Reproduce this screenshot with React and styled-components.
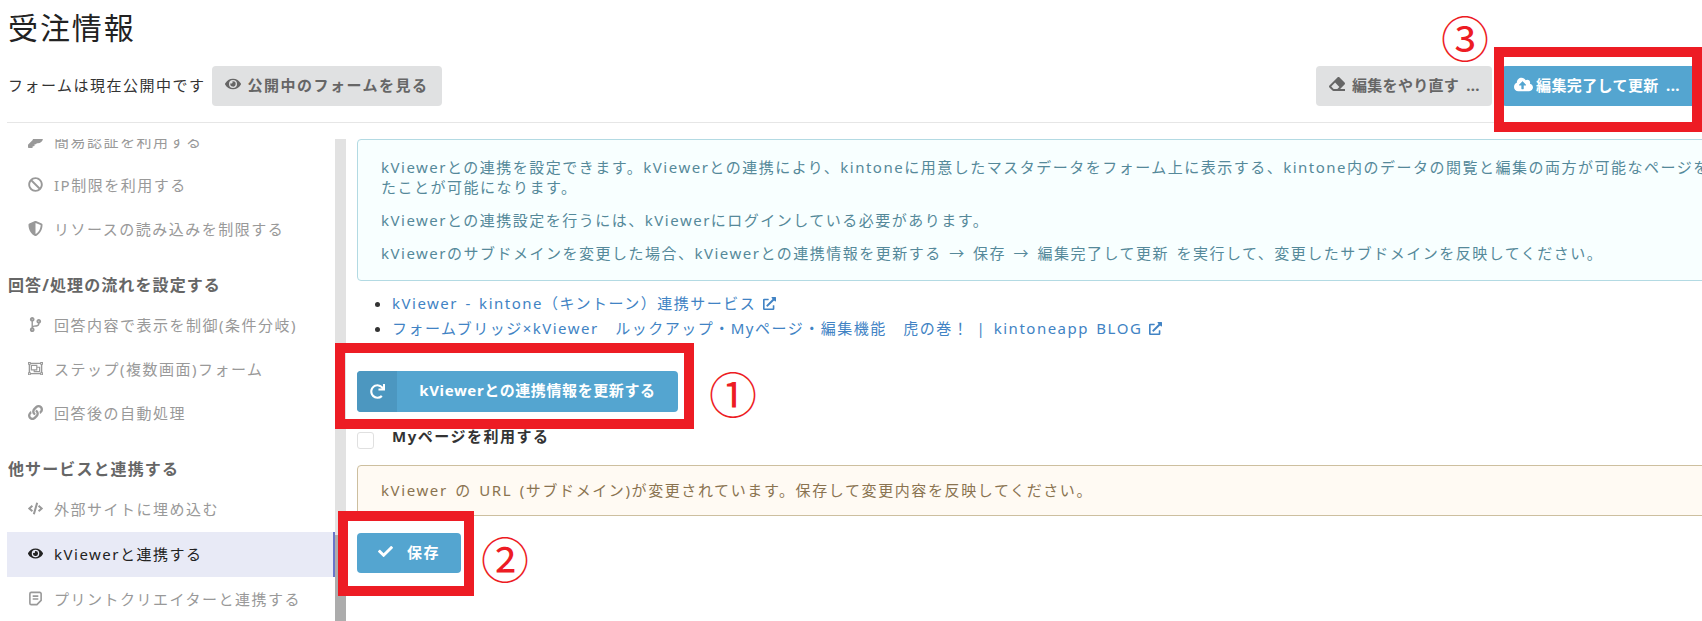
import styled, { createGlobalStyle } from 'styled-components';
import {
  FaBan, FaCheck, FaCloudUploadAlt, FaCode, FaCodeBranch, FaEraser, FaExternalLinkAlt, FaEye,
  FaKey, FaLink, FaRedo, FaRegObjectGroup, FaShieldAlt,
} from 'react-icons/fa';

const Global = createGlobalStyle`
  html, body { margin: 0; padding: 0; background: #fff; }
  body { font-family: "Noto Sans", "Noto Sans CJK JP", sans-serif; color: #333; }
`;

const Page = styled.div`
  position: relative;
  width: 1702px;
  height: 621px;
  overflow: hidden;
  display: flex;
  flex-direction: column;
`;

const Header = styled.header`
  flex: none;
  height: 122px;
  margin-left: 7px;
  border-bottom: 1px solid #e6e6e6;
  display: flex;
  flex-direction: column;
`;

const Title = styled.h1`
  margin: 10px 0 0 1px;
  height: 56px;
  font-size: 30px;
  line-height: 36px;
  font-weight: 400;
  letter-spacing: 1.9px;
  color: #222;
`;

const Toolbar = styled.div`
  display: flex;
  align-items: center;
  justify-content: space-between;
  padding-right: 6px;
`;

const ToolGroup = styled.div`
  display: flex;
  align-items: center;
  gap: ${p => p.$gap}px;
`;

const Status = styled.span`
  margin: 0 0 3px 1px;
  font-size: 15px;
  letter-spacing: 1.5px;
  color: #333;
`;

const Button = styled.button`
  display: flex;
  align-items: center;
  justify-content: ${p => p.$center ? 'center' : 'flex-start'};
  gap: ${p => p.$gap ?? 7}px;
  width: ${p => p.$w}px;
  height: ${p => p.$h ?? 40}px;
  margin-top: ${p => p.$top ?? 0}px;
  padding: ${p => p.$pad ?? '0 0 4px 13px'};
  box-sizing: border-box;
  border: 0;
  border-radius: 4px;
  font-family: inherit;
  font-size: 15px;
  font-weight: 700;
  letter-spacing: ${p => p.$ls ?? 1.5}px;
  word-spacing: 3px;
  white-space: nowrap;
  overflow: hidden;
  background: ${p => p.$primary ? '#54a5d0' : '#e0e1e2'};
  color: ${p => p.$primary ? '#fff' : '#666'};
  svg { flex: none; }
`;

const ButtonIcon = styled.span`
  flex: none;
  width: 40px;
  align-self: stretch;
  margin-bottom: -4px;
  display: flex;
  align-items: center;
  justify-content: center;
  background: #4c97c0;
`;

const ButtonLabel = styled.span`
  flex: 1;
  text-align: center;
`;

const Body = styled.div`
  flex: 1;
  min-height: 0;
  display: flex;
  margin-top: 16px;
`;

const Sidebar = styled.nav`
  flex: none;
  width: 328px;
  margin-left: 7px;
  overflow: hidden;
`;

const SideList = styled.div`
  margin-top: -20px;
`;

const SideHeading = styled.div`
  height: 52px;
  padding: 23px 0 7px 1px;
  box-sizing: border-box;
  font-size: 16px;
  line-height: 22px;
  font-weight: 700;
  letter-spacing: 1.1px;
  color: #666;
`;

const SideItem = styled.div`
  height: ${p => p.$active ? 45 : 44}px;
  margin-top: ${p => p.$active ? 1 : 0}px;
  box-sizing: border-box;
  display: flex;
  align-items: center;
  padding: 0 0 2px 20px;
  font-size: 15px;
  letter-spacing: 1.5px;
  white-space: nowrap;
  color: ${p => p.$active ? '#222' : '#999'};
  background: ${p => p.$active ? '#e8eaf6' : 'transparent'};
  border-right: ${p => p.$active ? '2px solid #6a75ca' : '0'};
`;

const SideIcon = styled.span`
  flex: none;
  width: 16px;
  margin-right: 11px;
  display: flex;
  align-items: center;
  justify-content: center;
  font-size: 15px;
  color: ${p => p.$active ? '#222' : '#999'};
`;

const Scrollbar = styled.div`
  flex: none;
  width: 11px;
  background: #e2e2e2;
  display: flex;
  flex-direction: column;
  justify-content: flex-end;
`;

const ScrollThumb = styled.div`
  height: 86px;
  background: #acacac;
`;

const Main = styled.main`
  flex: 1;
  min-width: 0;
  padding-left: 11px;
  display: flex;
  flex-direction: column;
  align-items: flex-start;
`;

const Message = styled.div`
  width: 1400px;
  box-sizing: border-box;
  border-radius: 4px;
  font-size: 15px;
  line-height: 20px;
  letter-spacing: ${p => p.$warn ? 1.6 : 1.5}px;
  word-spacing: 2px;
  white-space: nowrap;
  padding: ${p => p.$pad};
  margin-top: ${p => p.$top ?? 0}px;
  background: ${p => p.$warn ? '#fffaf3' : '#f8ffff'};
  border: 1px solid ${p => p.$warn ? '#cdbf9f' : '#b3dae3'};
  color: ${p => p.$warn ? '#8a7350' : '#55899a'};
  p { margin: 13px 0 0; }
  p:first-child { margin-top: 0; }
`;

const LinkList = styled.ul`
  margin: 10px 0 0;
  padding-left: 35px;
  font-size: 15px;
  line-height: 25px;
  letter-spacing: 1.5px;
  word-spacing: 2px;
  white-space: nowrap;
`;

const Anchor = styled.a`
  color: #4183c4;
  text-decoration: none;
  svg { margin-left: 7px; vertical-align: -1px; }
`;

const CheckRow = styled.label`
  display: flex;
  align-items: flex-start;
  height: 20px;
  margin-top: 14px;
  font-size: 15px;
  line-height: 20px;
  font-weight: 700;
  letter-spacing: 1.5px;
  color: #333;
`;

const Box = styled.span`
  width: 15px;
  height: 15px;
  margin: 6px 18px 0 0;
  border: 1px solid #e0e0e0;
  border-radius: 3px;
  background: #fff;
`;

/* annotations drawn on top of the screenshot */
const Frame = styled.div`
  position: absolute;
  left: ${p => p.$x}px;
  top: ${p => p.$y}px;
  width: ${p => p.$w}px;
  height: ${p => p.$h}px;
  box-sizing: border-box;
  border: 10px solid #ed1c24;
`;

const Mark = styled.span`
  position: absolute;
  left: ${p => p.$x}px;
  top: ${p => p.$y}px;
  width: 48px;
  height: 48px;
  font-family: "Noto Sans CJK JP", sans-serif;
  font-size: 48px;
  line-height: 48px;
  text-align: center;
  color: #ed1c24;
`;

const NoteIcon = () => (
  <svg width="15" height="15" viewBox="0 0 16 16" fill="none" stroke="currentColor" strokeWidth="1.7">
    <path d="M3.5 1.5h9a1.5 1.5 0 0 1 1.5 1.5v7l-4.5 4.5h-6A1.5 1.5 0 0 1 2 13V3a1.5 1.5 0 0 1 1.5-1.5z" />
    <path d="M5 5.5h6M5 8.5h6" />
  </svg>
);

const App = () => (
  <Page>
    <Global />
    <Header>
      <Title>受注情報</Title>
      <Toolbar>
        <ToolGroup $gap={6}>
          <Status>フォームは現在公開中です</Status>
          <Button $w={230}><FaEye size={16} />公開中のフォームを見る</Button>
        </ToolGroup>
        <ToolGroup $gap={10}>
          <Button $w={176} $ls={0.3}><FaEraser size={16} />編集をやり直す ...</Button>
          <Button $primary $w={194} $pad="0 0 4px 12px" $gap={3} $ls={0.4}><FaCloudUploadAlt size={19} />編集完了して更新 ...</Button>
        </ToolGroup>
      </Toolbar>
    </Header>
    <Body>
      <Sidebar>
        <SideList>
          <SideItem><SideIcon><FaKey /></SideIcon>簡易認証を利用する</SideItem>
          <SideItem><SideIcon><FaBan /></SideIcon>IP制限を利用する</SideItem>
          <SideItem><SideIcon><FaShieldAlt /></SideIcon>リソースの読み込みを制限する</SideItem>
          <SideHeading>回答/処理の流れを設定する</SideHeading>
          <SideItem><SideIcon><FaCodeBranch /></SideIcon>回答内容で表示を制御(条件分岐)</SideItem>
          <SideItem><SideIcon><FaRegObjectGroup /></SideIcon>ステップ(複数画面)フォーム</SideItem>
          <SideItem><SideIcon><FaLink /></SideIcon>回答後の自動処理</SideItem>
          <SideHeading>他サービスと連携する</SideHeading>
          <SideItem><SideIcon><FaCode /></SideIcon>外部サイトに埋め込む</SideItem>
          <SideItem $active><SideIcon $active><FaEye /></SideIcon>kViewerと連携する</SideItem>
          <SideItem><SideIcon><NoteIcon /></SideIcon>プリントクリエイターと連携する</SideItem>
        </SideList>
      </Sidebar>
      <Scrollbar><ScrollThumb /></Scrollbar>
      <Main>
        <Message $pad="17px 23px">
          <p>kViewerとの連携を設定できます。kViewerとの連携により、kintoneに用意したマスタデータをフォーム上に表示する、kintone内のデータの閲覧と編集の両方が可能なページを作成するといっ<br />たことが可能になります。</p>
          <p>kViewerとの連携設定を行うには、kViewerにログインしている必要があります。</p>
          <p>kViewerのサブドメインを変更した場合、kViewerとの連携情報を更新する → 保存 → 編集完了して更新 を実行して、変更したサブドメインを反映してください。</p>
        </Message>
        <LinkList>
          <li><Anchor>kViewer - kintone（キントーン）連携サービス<FaExternalLinkAlt size={13} /></Anchor></li>
          <li><Anchor>フォームブリッジ×kViewer　ルックアップ・Myページ・編集機能　虎の巻！ | kintoneapp BLOG<FaExternalLinkAlt size={13} /></Anchor></li>
        </LinkList>
        <Button $primary $w={321} $h={41} $top={30} $pad="0 0 4px" $gap={0} $ls={0.6}>
          <ButtonIcon><FaRedo size={15} /></ButtonIcon>
          <ButtonLabel>kViewerとの連携情報を更新する</ButtonLabel>
        </Button>
        <CheckRow><Box />Myページを利用する</CheckRow>
        <Message $warn $top={19} $pad="14px 23px 15px">kViewer の URL (サブドメイン)が変更されています。保存して変更内容を反映してください。</Message>
        <Button $primary $center $w={104} $top={17} $pad="0 0 4px" $gap={14}>
          <FaCheck size={15} />保存
        </Button>
      </Main>
    </Body>
    <Frame $x={1494} $y={47} $w={208} $h={85} />
    <Frame $x={335} $y={343} $w={359} $h={86} />
    <Frame $x={338} $y={511} $w={136} $h={85} />
    <Mark $x={709} $y={368}>①</Mark>
    <Mark $x={481} $y={533}>②</Mark>
    <Mark $x={1441} $y={12}>③</Mark>
  </Page>
);

export default App;
